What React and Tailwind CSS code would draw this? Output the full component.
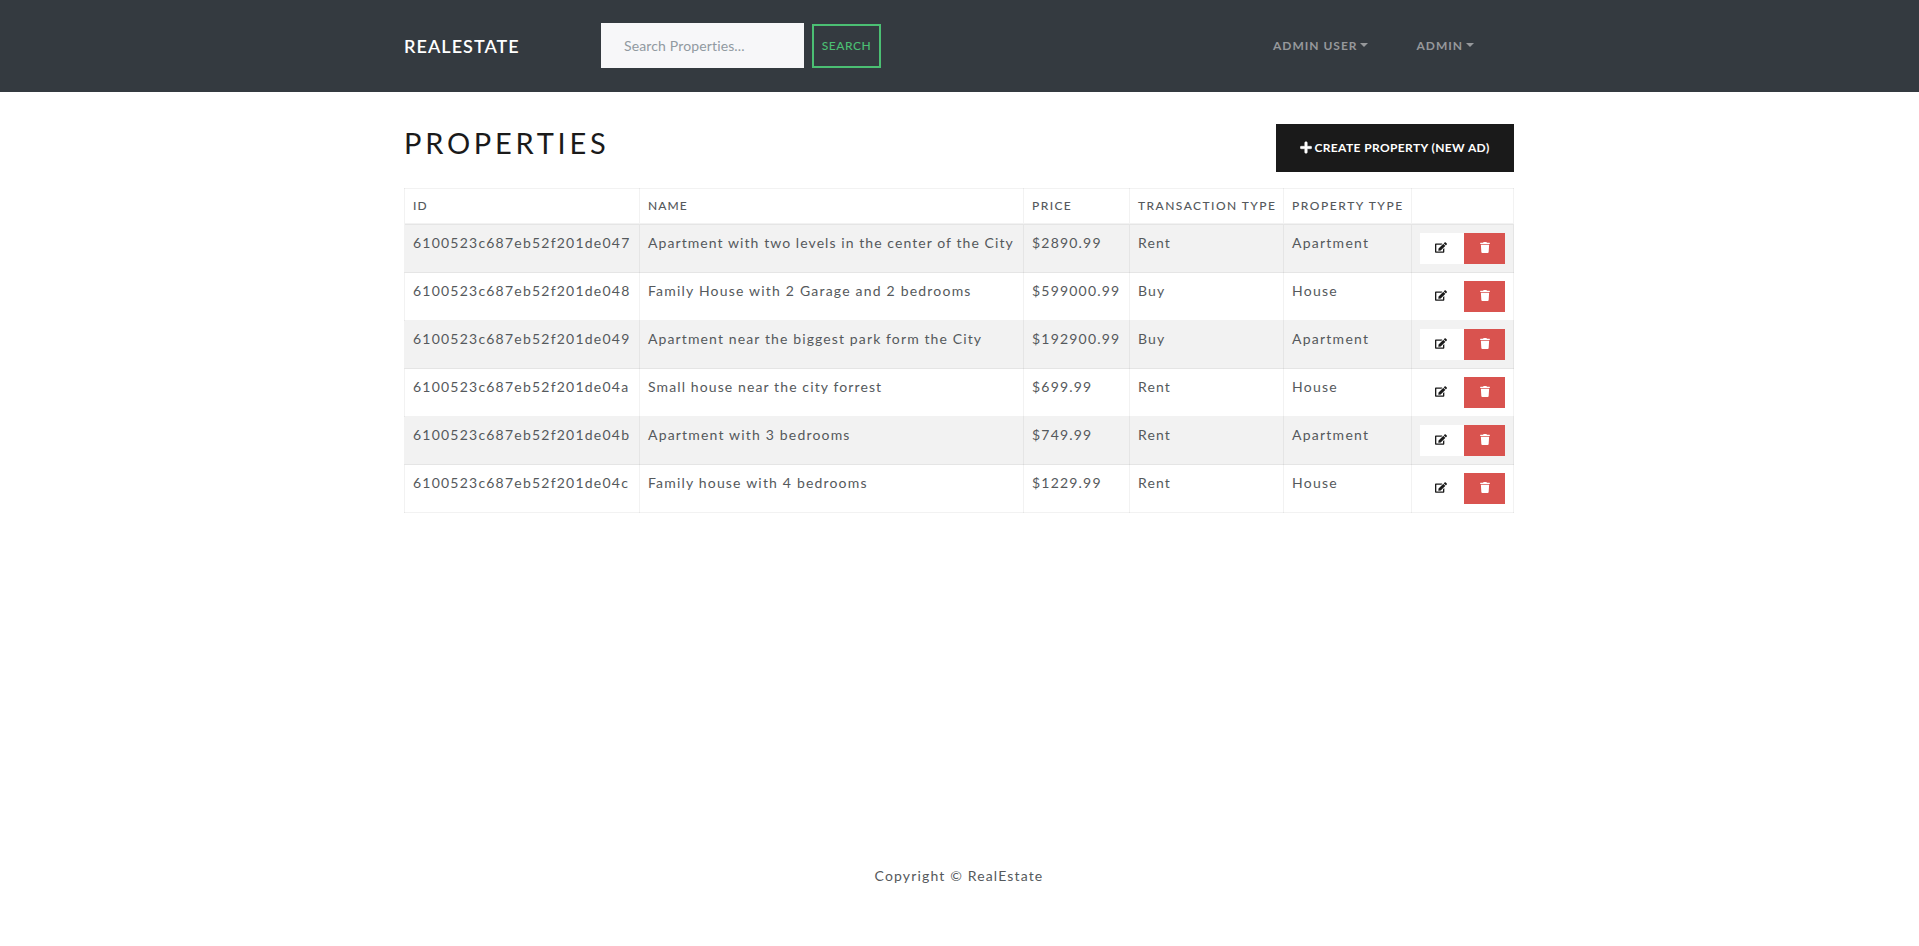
import { FaPlus, FaEdit, FaTrash } from "react-icons/fa";

const rows = [
  { id: "6100523c687eb52f201de047", name: "Apartment with two levels in the center of the City", fit: "tracking-[1.07px]", price: "$2890.99", deal: "Rent", type: "Apartment" },
  { id: "6100523c687eb52f201de048", name: "Family House with 2 Garage and 2 bedrooms", fit: "tracking-[1.2px]", price: "$599000.99", deal: "Buy", type: "House" },
  { id: "6100523c687eb52f201de049", name: "Apartment near the biggest park form the City", fit: "tracking-[1.12px]", price: "$192900.99", deal: "Buy", type: "Apartment" },
  { id: "6100523c687eb52f201de04a", name: "Small house near the city forrest", fit: "tracking-[1.11px]", price: "$699.99", deal: "Rent", type: "House" },
  { id: "6100523c687eb52f201de04b", name: "Apartment with 3 bedrooms", fit: "tracking-[1.18px]", price: "$749.99", deal: "Rent", type: "Apartment" },
  { id: "6100523c687eb52f201de04c", name: "Family house with 4 bedrooms", fit: "tracking-[1.18px]", price: "$1229.99", deal: "Rent", type: "House" },
];

const heads = [
  ["ID", "tracking-[1.1px]"],
  ["NAME", "tracking-[1.1px]"],
  ["PRICE", "tracking-[1.4px]"],
  ["TRANSACTION TYPE", "tracking-[1.45px]"],
  ["PROPERTY TYPE", "tracking-[1.55px]"],
  ["", ""],
];

function Caret() {
  return <span className="mb-px ml-[3px] inline-block h-0 w-0 border-x-[4px] border-t-[4px] border-x-transparent border-t-current" />;
}

function NavItem({ label }) {
  return (
    <a className="flex items-center whitespace-nowrap text-xs font-bold tracking-[0.98px] text-[#96989b]">
      {label}
      <Caret />
    </a>
  );
}

function Cell({ className, children }) {
  return (
    <td className={`whitespace-nowrap border border-black/5 px-2 pt-[7px] pb-2 align-top leading-[21px] ${className}`}>
      {children}
    </td>
  );
}

export default function App() {
  return (
    <div className="flex min-h-[946px] flex-col bg-white font-['Lato',sans-serif] text-sm text-[#55595c]">
      <header className="h-[92px] bg-[#343a40]">
        <div className="mx-auto flex h-full w-[1111px] items-center pr-px pb-px">
          <a className="w-[197px] text-lg font-semibold tracking-[1.05px] text-white">REALESTATE</a>
          <input
            className="h-[45px] w-[203px] bg-[#f7f7f9] pr-6 pl-[23px] text-sm tracking-[0.14px] outline-none placeholder:text-[#919aa1]"
            placeholder="Search Properties..."
          />
          <button className="mt-px ml-2 h-11 w-[69px] border-2 border-[#4bbf73] text-xs font-medium tracking-[0.5px] text-[#4bbf73]">SEARCH</button>
          <nav className="ml-auto flex gap-12 pr-10">
            <NavItem label="ADMIN USER" />
            <NavItem label="ADMIN" />
          </nav>
        </div>
      </header>
      <main className="mx-auto w-[1111px] grow pt-8 pr-px">
        <div className="mb-4 flex justify-between">
          <h1 className="text-[29px] leading-[37px] tracking-[3.75px] text-[#1a1a1a]">PROPERTIES</h1>
          <button className="flex h-12 w-[238px] items-center justify-center gap-[2px] bg-[#1a1a1a] text-xs font-bold tracking-[0.38px] whitespace-nowrap text-white">
            <FaPlus className="mb-px h-[13px] w-3 stroke-white stroke-[20px]" />
            CREATE PROPERTY (NEW AD)
          </button>
        </div>
        <table className="w-[1110px] table-fixed border-collapse border border-black/5">
          <colgroup>
            <col className="w-[235px]" />
            <col className="w-[384px]" />
            <col className="w-[106px]" />
            <col className="w-[154px]" />
            <col className="w-[128px]" />
            <col />
          </colgroup>
          <thead>
            <tr>
              {heads.map(([label, fit]) => (
                <th key={label} className={`h-[35px] whitespace-nowrap border border-b-2 border-black/5 p-2 text-left text-xs leading-[18px] font-medium ${fit}`}>
                  {label}
                </th>
              ))}
            </tr>
          </thead>
          <tbody>
            {rows.map((r) => (
              <tr key={r.id} className="odd:bg-black/5">
                <Cell className="tracking-[1.22px]">{r.id}</Cell>
                <Cell className={r.fit}>{r.name}</Cell>
                <Cell className="tracking-[1.2px]">{r.price}</Cell>
                <Cell className="tracking-[1.1px]">{r.deal}</Cell>
                <Cell className="tracking-[1.25px]">{r.type}</Cell>
                <td className="border border-black/5 p-2 align-top">
                  <div className="flex">
                    <button className="flex h-[31px] w-11 items-center justify-center bg-white pr-[2px] pb-[2px] text-[#1a1a1a]">
                      <FaEdit className="h-[11px] w-3" />
                    </button>
                    <button className="flex h-[31px] w-[41px] items-center justify-center bg-[#d9534f] pb-[2px] text-white">
                      <FaTrash className="h-[11px] w-[10px]" />
                    </button>
                  </div>
                </td>
              </tr>
            ))}
          </tbody>
        </table>
      </main>
      <footer className="pr-px pb-[60px] text-center leading-[21px] tracking-[1.15px]">Copyright © RealEstate</footer>
    </div>
  );
}
